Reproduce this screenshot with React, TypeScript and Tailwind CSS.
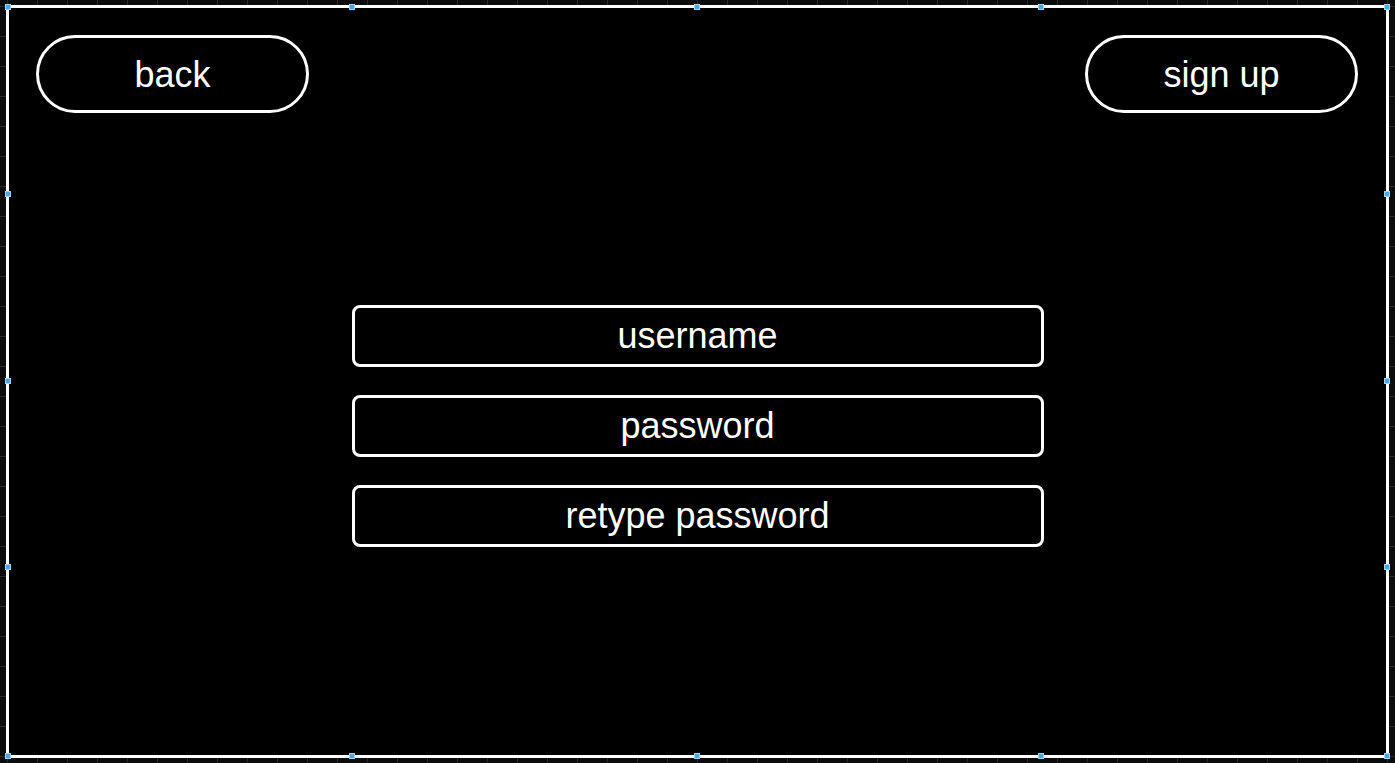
import React from "react";

const fields = ["username", "password", "retype password"];

// selection handles on the frame edges (quarter points)
const handles = [
  "left-[-4px] top-[-4px]",
  "left-[calc(25%-4px)] top-[-4px]",
  "left-[calc(50%-4px)] top-[-4px]",
  "left-[calc(75%-4px)] top-[-4px]",
  "right-[-4px] top-[-4px]",
  "left-[-4px] top-[calc(25%-4px)]",
  "left-[-4px] top-[calc(50%-4px)]",
  "left-[-4px] top-[calc(75%-4px)]",
  "right-[-4px] top-[calc(25%-4px)]",
  "right-[-4px] top-[calc(50%-4px)]",
  "right-[-4px] top-[calc(75%-4px)]",
  "left-[-4px] bottom-[-4px]",
  "left-[calc(25%-4px)] bottom-[-4px]",
  "left-[calc(50%-4px)] bottom-[-4px]",
  "left-[calc(75%-4px)] bottom-[-4px]",
  "right-[-4px] bottom-[-4px]",
];

const App: React.FC = () => {
  return (
    <div className="w-[1395px] h-[763px] overflow-hidden bg-[#0b0b0b] bg-[linear-gradient(to_right,#2a2a2a_1px,transparent_1px),linear-gradient(to_bottom,#2a2a2a_1px,transparent_1px)] bg-[size:30px_30px] bg-[position:7px_6px] pt-[5px] pl-[6px] font-['Liberation_Sans',Arial,sans-serif] text-white">
      <div className="relative w-[1383px] h-[753px] bg-black border-[3px] border-white">
        <div className="flex justify-between pl-[27px] pr-[28px] pt-[27px]">
          <button className="w-[273px] h-[78px] rounded-full border-[3px] border-white text-[36px] leading-none text-white pt-[2px]">
            back
          </button>
          <button className="w-[273px] h-[78px] rounded-full border-[3px] border-white text-[36px] leading-none text-white pt-[2px]">
            sign up
          </button>
        </div>

        <div className="flex flex-col items-center gap-[28px] mt-[192px]">
          {fields.map((f) => (
            <div
              key={f}
              className="w-[692px] h-[62px] rounded-[8px] border-[3px] border-white flex items-center justify-center text-[36px] leading-none"
            >
              {f}
            </div>
          ))}
        </div>

        {handles.map((h, i) => (
          <div
            key={i}
            className={`absolute ${h} w-[6px] h-[6px] bg-[#4aa8e8] border border-[#9fd3f5]`}
          />
        ))}
      </div>
    </div>
  );
};

export default App;
